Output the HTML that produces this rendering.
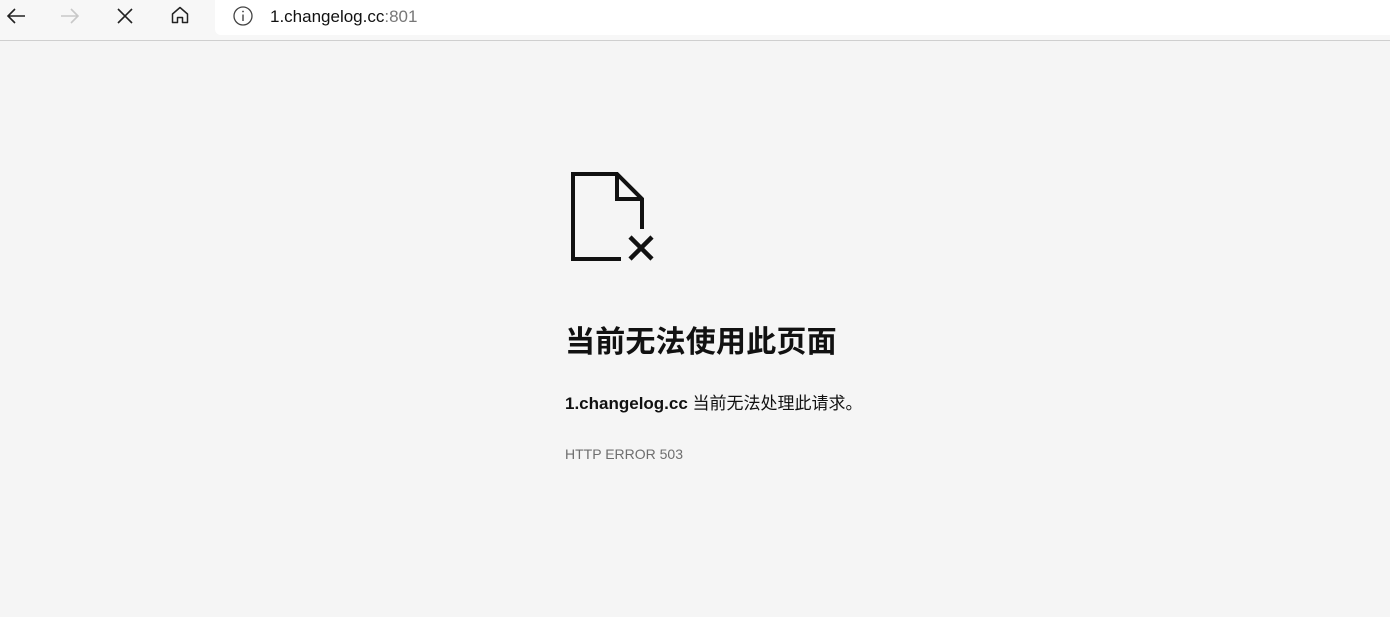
<!DOCTYPE html>
<html><head><meta charset="utf-8"><style>
html,body{margin:0;padding:0;width:1390px;height:617px;overflow:hidden;background:#f5f5f5;font-family:"Liberation Sans","Noto Sans CJK SC",sans-serif;}
.top{position:absolute;left:0;top:0;width:1390px;height:40px;background:#f7f7f7;border-bottom:1px solid #cfcfcf;}
.addr{position:absolute;left:215px;top:0;width:1175px;height:35px;background:#fff;border-radius:0 0 0 6px;}
.url{position:absolute;left:270px;top:7px;font-size:17px;color:#111;}
.url span{color:#777}
svg{position:absolute}
.h1{position:absolute;left:565px;top:317px;font-size:30px;font-weight:bold;color:#111;white-space:nowrap;letter-spacing:0.2px}
.p{position:absolute;left:565px;top:389px;font-size:17px;color:#111;white-space:nowrap}
.e{position:absolute;left:565px;top:446px;font-size:14px;color:#6e6e6e;}
</style></head><body>
<div class="top"><div class="addr"></div>
<svg style="left:5px;top:5px" width="22" height="22" viewBox="0 0 22 22"><path d="M20 11H3M10 4L3 11L10 18" stroke="#222" stroke-width="1.6" fill="none"/></svg>
<svg style="left:59px;top:5px" width="22" height="22" viewBox="0 0 22 22"><path d="M2 11H19M12 4L19 11L12 18" stroke="#c8c8c8" stroke-width="1.6" fill="none"/></svg>
<svg style="left:116px;top:7px" width="18" height="18" viewBox="0 0 18 18"><path d="M2 2L16 16M16 2L2 16" stroke="#222" stroke-width="1.6"/></svg>
<svg style="left:170px;top:5px" width="20" height="20" viewBox="0 0 20 20"><path d="M2.5 9L10 2.5L17.5 9V17.5H12.5V12.5H7.5V17.5H2.5Z" stroke="#222" stroke-width="1.5" fill="none" stroke-linejoin="round"/></svg>
<svg style="left:232px;top:5px" width="22" height="22" viewBox="0 0 22 22"><circle cx="11" cy="11" r="9" stroke="#444" stroke-width="1.3" fill="none"/><path d="M11 9.5V16" stroke="#444" stroke-width="1.4"/><circle cx="11" cy="6.5" r="0.9" fill="#444"/></svg>
<div class="url">1.changelog.cc<span>:801</span></div>
</div>
<svg style="left:560px;top:165px" width="100" height="100" viewBox="0 0 100 100">
<path d="M61 94H13V9H57L82 34V64" stroke="#111" stroke-width="4" fill="none"/>
<path d="M57 9V34H82" stroke="#111" stroke-width="4" fill="none"/>
<path d="M70 72L92 94M92 72L70 94" stroke="#111" stroke-width="4.5"/>
</svg>
<div class="h1">当前无法使用此页面</div>
<div class="p"><b>1.changelog.cc</b> 当前无法处理此请求。</div>
<div class="e">HTTP ERROR 503</div>
</body></html>
